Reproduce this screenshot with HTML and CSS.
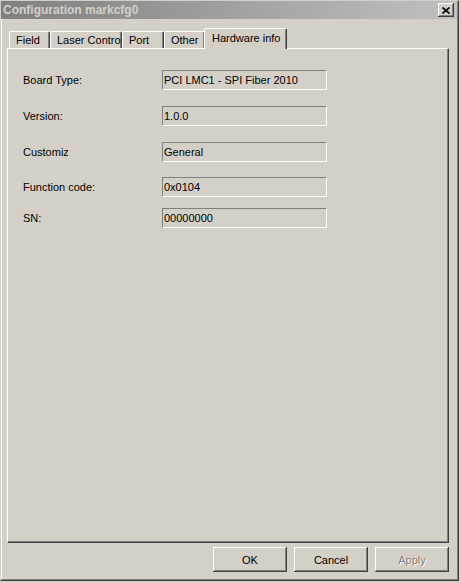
FILE: index.html
```html
<!DOCTYPE html>
<html lang="en">
<head>
    <meta charset="UTF-8">
    <title>Configuration markcfg0</title>
    <link rel="stylesheet" href="styles.css">
</head>
<body>
    <div id="dlg">
        <div class="titlebar">
            <span class="caption">Configuration markcfg0</span>
            <button class="close">
                <svg width="8" height="7" viewBox="0 0 8 7">
                    <path d="M0.5 0.5 L7.5 6.5 M7.5 0.5 L0.5 6.5" stroke="#000" stroke-width="1.6"/>
                </svg>
            </button>
        </div>
        <ul class="tabs">
            <li class="tab t-field">Field</li>
            <li class="tab t-laser">Laser Contro</li>
            <li class="tab t-port">Port</li>
            <li class="tab t-other">Other</li>
            <li class="tab t-hw active">Hardware info</li>
        </ul>
        <div class="panel">
            <div class="row">
                <span class="label">Board Type:</span>
                <span class="box">PCI LMC1 - SPI Fiber 2010</span>
            </div>
            <div class="row">
                <span class="label">Version:</span>
                <span class="box">1.0.0</span>
            </div>
            <div class="row">
                <span class="label clip">Customize</span>
                <span class="box">General</span>
            </div>
            <div class="row r4">
                <span class="label">Function code:</span>
                <span class="box">0x0104</span>
            </div>
            <div class="row r5">
                <span class="label">SN:</span>
                <span class="box">00000000</span>
            </div>
        </div>
        <div class="buttons">
            <button class="btn">OK</button>
            <button class="btn">Cancel</button>
            <button class="btn disabled">Apply</button>
        </div>
    </div>
</body>
</html>
```
FILE: styles.css
```css
html, body{
    margin: 0;
    padding: 0;
    background-color: #d4d0c8;
}
#dlg{
    width: 459px;
    height: 581px;
    background-color: #d4d0c8;
    border-top: 1px solid #d4d0c8;
    border-left: 1px solid #d4d0c8;
    border-right: 1px solid #404040;
    border-bottom: 1px solid #404040;
    box-shadow: inset -1px -1px 0 #808080, inset 1px 1px 0 #fff;
    font-family: "Liberation Sans", Arial, sans-serif;
    font-size: 11px;
    color: #000;
    box-sizing: border-box;
}
.titlebar{
    height: 18px;
    margin: 0 1px 0 0;
    background: linear-gradient(to right, #808080, #c0c0c0);
    display: flex;
    align-items: center;
    justify-content: space-between;
    padding: 0 3px 0 2px;
}
.caption{
    color: #d4d0c8;
    font-weight: bold;
    font-size: 12px;
}
.close{
    width: 16px;
    height: 14px;
    padding: 0;
    margin: 0;
    background-color: #d4d0c8;
    border: none;
    box-shadow: inset -1px -1px 0 #404040, inset 1px 1px 0 #fff, inset -2px -2px 0 #808080;
    display: flex;
    align-items: center;
    justify-content: center;
}
.tabs{
    list-style: none;
    margin: 8px 0 0 8px;
    padding: 0;
    display: flex;
    align-items: flex-end;
    height: 21px;
}
.tab{
    height: 17px;
    line-height: 17px;
    padding-left: 6px;
    border-top: 1px solid #fff;
    border-left: 1px solid #fff;
    border-right: 1px solid #404040;
    box-shadow: inset -1px 0 0 #808080;
    border-radius: 2px 2px 0 0;
    box-sizing: border-box;
    white-space: nowrap;
    overflow: hidden;
}
.t-field{ width: 41px; }
.t-laser{ width: 72px; }
.t-port{ width: 42px; }
.t-other{ width: 41px; }
.tab.active{
    width: 83px;
    height: 21px;
    line-height: 19px;
    padding-left: 7px;
    margin-left: -1px;
    margin-bottom: -1px;
    background-color: #d4d0c8;
    position: relative;
    z-index: 1;
}
.panel{
    height: 495px;
    margin: 0 9px 0 6px;
    border-top: 1px solid #fff;
    border-left: 1px solid #fff;
    border-right: 1px solid #404040;
    border-bottom: 1px solid #404040;
    box-shadow: inset -1px -1px 0 #808080;
    box-sizing: border-box;
    padding: 21px 0 0 15px;
    display: flex;
    flex-direction: column;
    gap: 16px;
}
.row{
    display: flex;
    align-items: center;
    height: 20px;
}
.row.r4{ margin-top: -1px; }
.row.r5{ margin-top: -5px; }
.label{
    width: 139px;
    white-space: nowrap;
}
.label.clip{
    width: 45px;
    margin-right: 94px;
    overflow: hidden;
}
.box{
    width: 165px;
    height: 20px;
    line-height: 18px;
    padding-left: 1px;
    border-top: 1px solid #808080;
    border-left: 1px solid #808080;
    border-right: 1px solid #fff;
    border-bottom: 1px solid #fff;
    box-sizing: border-box;
    white-space: nowrap;
    overflow: hidden;
}
.buttons{
    display: flex;
    justify-content: flex-end;
    gap: 7px;
    padding: 4px 9px 0 0;
}
.btn{
    width: 74px;
    height: 25px;
    padding: 0;
    margin: 0;
    font-family: "Liberation Sans", Arial, sans-serif;
    font-size: 11px;
    color: #000;
    background-color: #d4d0c8;
    border: none;
    box-shadow: inset -1px -1px 0 #404040, inset 1px 1px 0 #fff, inset -2px -2px 0 #808080;
}
.btn.disabled{
    color: #808080;
    text-shadow: 1px 1px 0 #fff;
}
```
